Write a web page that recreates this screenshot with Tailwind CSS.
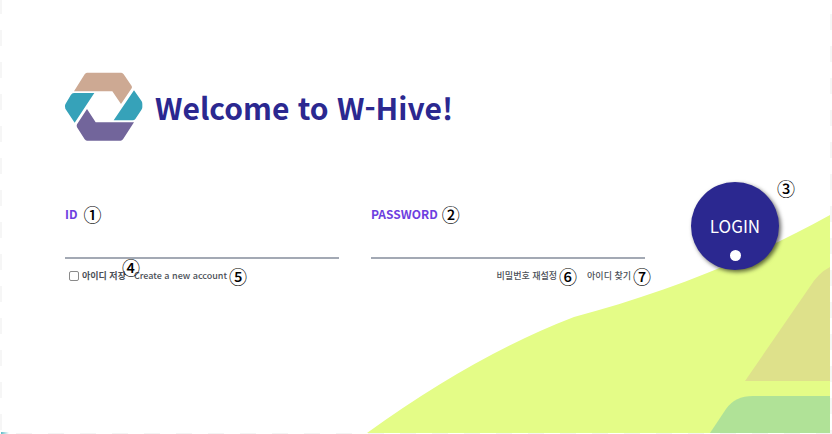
<!DOCTYPE html>
<html lang="ko">
<head>
<meta charset="utf-8">
<meta name="viewport" content="width=device-width, initial-scale=1">
<title>W-Hive</title>
<script src="https://cdn.jsdelivr.net/npm/@tailwindcss/browser@4"></script>
</head>
<body class="relative min-h-screen overflow-x-hidden bg-white font-['Noto_Sans_CJK_KR',sans-serif]">
  <!-- Transparent-canvas edges -->
  <div aria-hidden="true" class="absolute inset-y-0 left-0 w-0.5 bg-[repeating-linear-gradient(to_bottom,#f6f6f6_0_14px,#fff_14px_30px,#f6f6f6_30px_32px)]"></div>
  <div aria-hidden="true" class="absolute inset-y-0 right-0 w-0.5 bg-[repeating-linear-gradient(to_bottom,#fff_0_14px,#f6f6f6_14px_30px,#fff_30px_32px)]"></div>
  <div aria-hidden="true" class="absolute inset-x-0 bottom-0 h-px bg-[repeating-linear-gradient(to_right,#fff_0_16px,#f4f4f4_16px_32px)]"></div>
  <div aria-hidden="true" class="absolute bottom-0 left-px h-0.5 w-2 bg-linear-to-r from-[#58bcc8] to-white"></div>

  <!-- Background hills -->
  <svg aria-hidden="true" class="absolute right-0 bottom-0 h-[220px] w-[466px]" viewBox="366 214 466 220">
    <path fill="#e4fc87" d="M367 433Q475 355 574 317C660 294 745 262 830 215V433Z"/>
    <path fill="#dee18b" d="M745 381 809 288Q818 273 830 267V381Z"/>
    <path fill="#b0e297" d="M710 433 726 409Q735 396 753 396H830V433Z"/>
  </svg>

  <main class="relative pt-[72px] pr-[53px] pl-[65px]">
    <header class="flex items-center gap-3">
      <svg role="img" aria-label="W-Hive" class="-ml-px h-[70px] w-[79px] shrink-0" viewBox="42 36 237 210">
        <path fill="#cda993" d="M111 38H214Q218 38 221 43L245 78Q247 82 245 85L213 132 187 94H72L104 43Q107 38 111 38Z"/>
        <path fill="#36a2b9" d="M72 99H133L74 188 46 146Q43 139 46 133L62 106Q66 99 72 99Z"/>
        <path fill="#36a2b9" d="M252 91 275 124Q277 128 277 132V142Q277 146 274 150L256 177Q253 181 248 181H191Z"/>
        <path fill="#72659b" d="M111 147 137 187H252L219 238Q216 242 212 242H111Q107 242 104 238L81 202Q79 197 81 193Z"/>
      </svg>
      <h1 class="text-[30px] leading-9 font-bold text-[#2b2890]">Welcome to W-Hive!</h1>
    </header>

    <form class="mt-10 flex items-start gap-[46px]">
      <div class="min-w-0 flex-1 pt-[22px]">
        <div class="grid grid-cols-2 gap-8">
          <div>
            <div class="flex h-5 items-center gap-1.5">
              <label for="user-id" class="text-xs font-bold text-[#6d3fe0]">ID</label>
              <span class="text-lg leading-5 font-medium text-black">①</span>
            </div>
            <input id="user-id" type="text" autocomplete="username" class="block h-[35px] w-full border-b-2 border-[#a3a9b4] bg-transparent text-sm outline-none">
          </div>
          <div>
            <div class="flex h-5 items-center gap-1">
              <label for="user-pw" class="text-xs font-bold text-[#6d3fe0]">PASSWORD</label>
              <span class="text-lg leading-5 font-medium text-black">②</span>
            </div>
            <input id="user-pw" type="password" autocomplete="current-password" class="block h-[35px] w-full border-b-2 border-[#a3a9b4] bg-transparent text-sm outline-none">
          </div>
        </div>
        <div class="mt-[7px] -mr-1.5 flex h-5 items-center justify-between text-[9px] text-[#4b4f57]">
          <div class="flex items-center pl-1">
            <input id="save-id" type="checkbox" class="mr-[3px] size-2.5 appearance-none rounded-xs border border-[#8a8a8a] bg-white checked:bg-[#2b2890]">
            <label for="save-id" class="relative mr-2 font-bold">아이디 저장<span class="absolute -top-3 -right-3.5 text-lg leading-5 font-medium text-black">④</span></label>
            <a href="#create" class="font-medium">Create a new account</a>
            <span class="ml-0.5 text-lg leading-5 font-medium text-black">⑤</span>
          </div>
          <div class="flex items-center">
            <a href="#reset" class="font-medium">비밀번호 재설정</a>
            <span class="mr-2.5 ml-0.5 text-lg leading-5 font-medium text-black">⑥</span>
            <a href="#find" class="font-medium">아이디 찾기</a>
            <span class="ml-0.5 text-lg leading-5 font-medium text-black">⑦</span>
          </div>
        </div>
      </div>
      <div class="relative shrink-0">
        <button type="submit" class="flex size-[88px] flex-col items-center rounded-full bg-[#2b2890] pt-8 text-[17px] leading-6 text-white shadow-[2px_2px_4px_rgba(0,0,0,0.6)]">LOGIN<span class="mt-3 size-[11px] shrink-0 rounded-full bg-white"></span></button>
        <span class="absolute -top-1 -right-4 text-lg leading-5 font-medium text-black">③</span>
      </div>
    </form>
  </main>
</body>
</html>
